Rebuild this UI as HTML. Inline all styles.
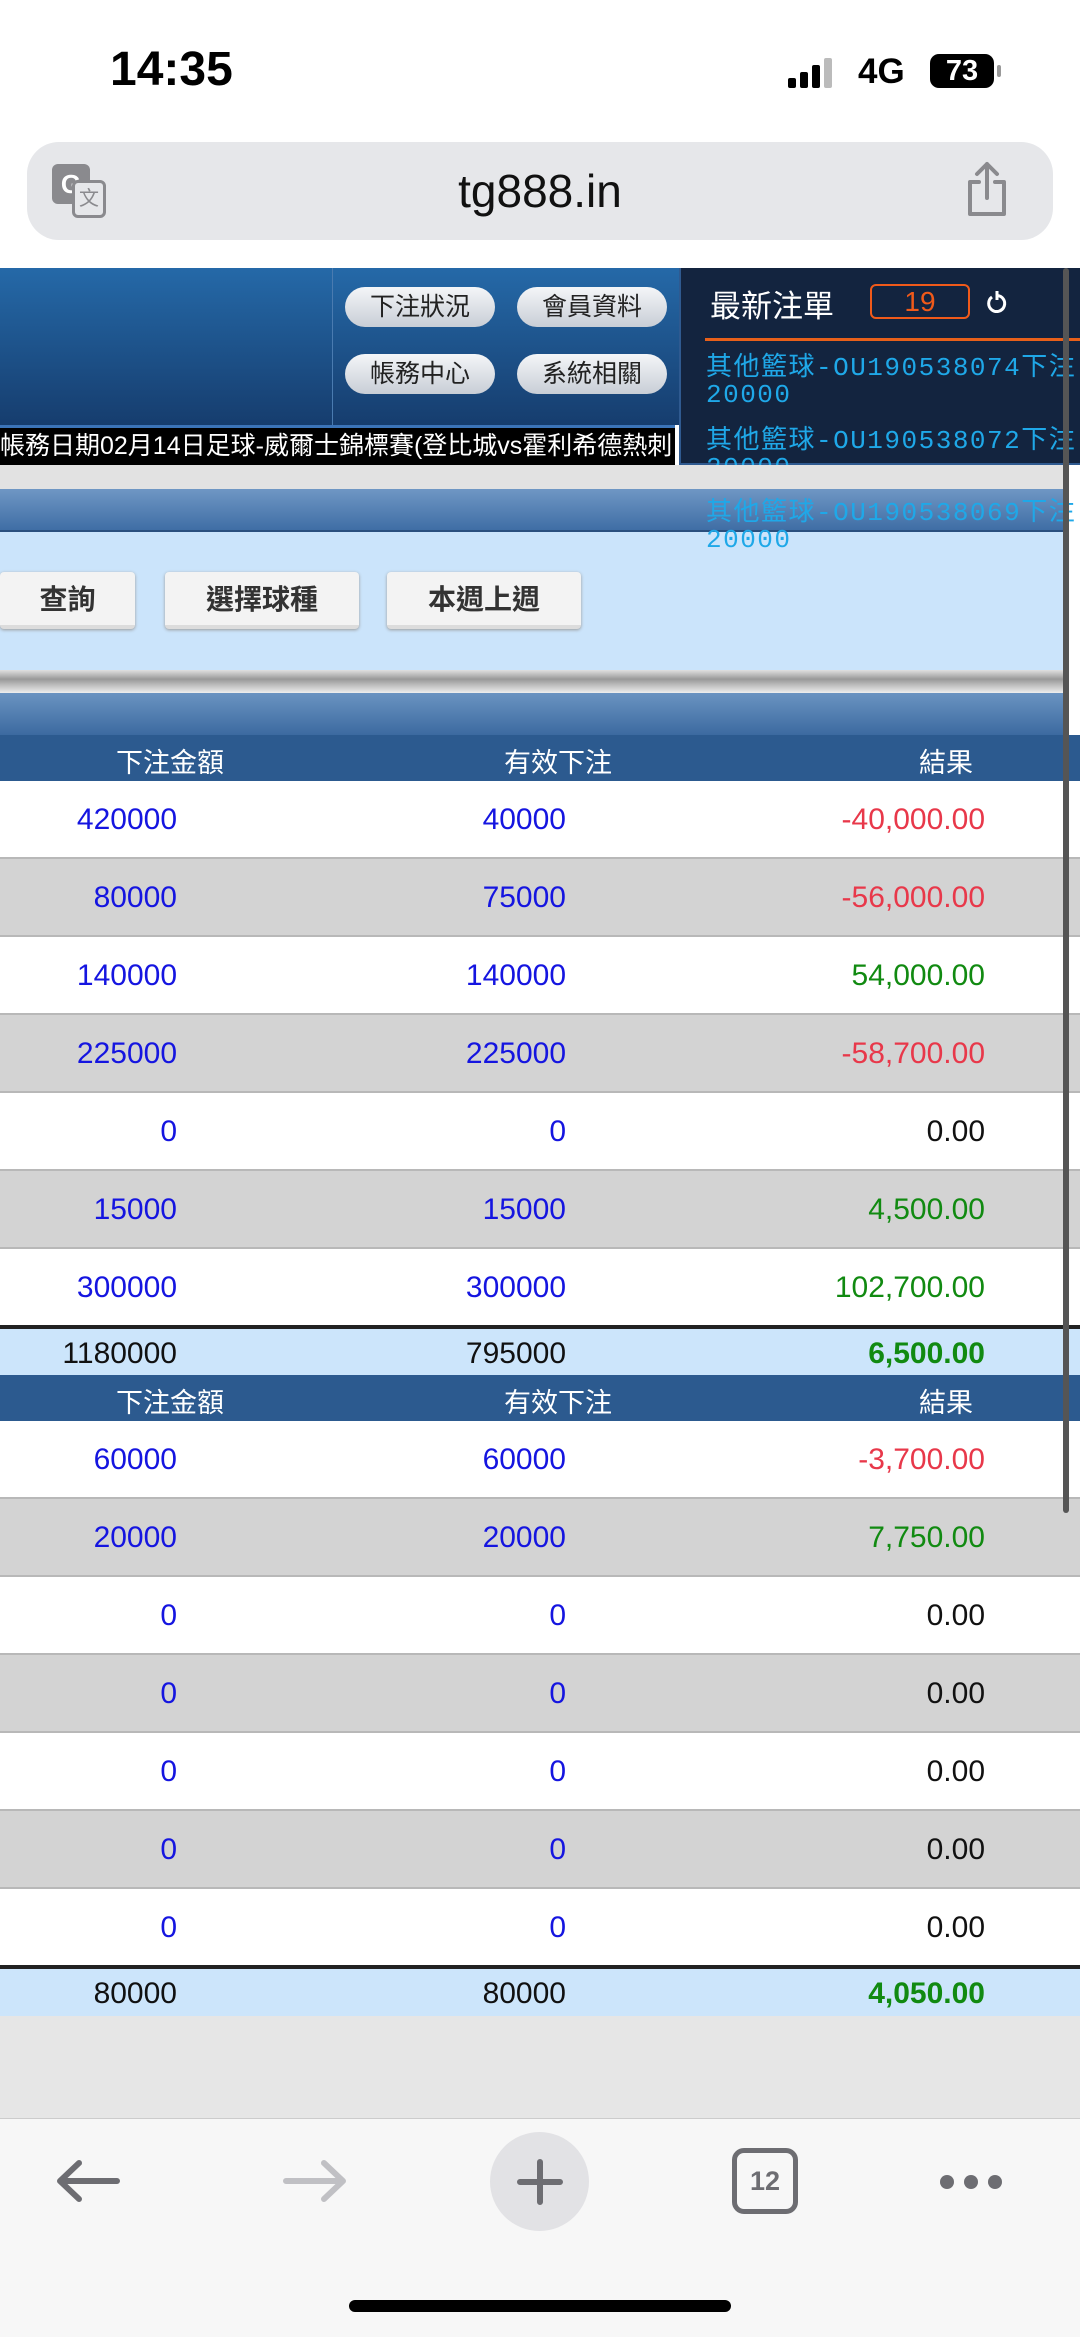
<!DOCTYPE html>
<html><head><meta charset="utf-8"><style>
*{margin:0;padding:0;box-sizing:border-box}
body{width:1080px;height:2337px;position:relative;overflow:hidden;background:#fff;font-family:"Liberation Sans","Noto Sans CJK TC",sans-serif}
.a{position:absolute}
.btn{position:absolute;height:40px;width:150px;border-radius:20px;background:linear-gradient(#f4f6f8,#c8ced6);color:#222;font-size:25px;text-align:center;line-height:40px}
.bet{position:absolute;left:706px;color:#1fa8e8;font-size:26px;font-family:"Liberation Mono","Noto Sans CJK TC",monospace;white-space:nowrap;letter-spacing:1.5px}
.sb{position:absolute;top:572px;height:57px;background:#f3f3f3;border-bottom:4px solid #dcdcdc;border-radius:4px;box-shadow:0 1px 3px #999;font-size:28px;font-weight:bold;color:#333;text-align:center;line-height:55px}
.hd{position:absolute;left:0;width:1080px;height:46px;background:#2c5a8f;color:#fff;font-size:27px}
.hd span{position:absolute;top:6px;transform:translateX(-50%)}
.row{position:absolute;left:0;width:1080px;height:78px;border-bottom:2px solid #b8b8b8;font-size:30px}
.row span,.tot span{position:absolute;top:22px;text-align:right}
.c1{right:903px;color:#1515e0}.c2{right:514px;color:#1515e0}.c3{right:95px}
.g{background:#d3d3d3}
.r{color:#e8384a}.gr{color:#118a11}.k{color:#111}
.tot{position:absolute;left:0;width:1080px;height:46px;background:#cce5fb;border-top:4px solid #222;font-size:30px;color:#111}
.tot span{top:8px}
</style></head><body>
<!-- status bar -->
<div class="a" style="left:110px;top:42px;font-size:48px;font-weight:bold;color:#000">14:35</div>
<div class="a" style="left:788px;top:58px;width:48px;height:30px">
<div class="a" style="left:0;top:20px;width:8px;height:10px;background:#000;border-radius:2px"></div>
<div class="a" style="left:12px;top:14px;width:8px;height:16px;background:#000;border-radius:2px"></div>
<div class="a" style="left:24px;top:7px;width:8px;height:23px;background:#000;border-radius:2px"></div>
<div class="a" style="left:36px;top:0;width:8px;height:30px;background:#bbb;border-radius:2px"></div></div>
<div class="a" style="left:858px;top:52px;font-size:35px;font-weight:bold">4G</div>
<div class="a" style="left:930px;top:54px;width:64px;height:34px;background:#000;border-radius:9px;color:#fff;font-size:29px;font-weight:bold;text-align:center;line-height:34px">73</div>
<div class="a" style="left:997px;top:65px;width:4px;height:12px;background:#999;border-radius:2px"></div>
<!-- url bar -->
<div class="a" style="left:27px;top:142px;width:1026px;height:98px;background:#e6e7ea;border-radius:32px"></div>
<div class="a" style="left:52px;top:164px;width:38px;height:40px;background:#8a8a8e;border-radius:6px;color:#fff;font-weight:bold;font-size:26px;line-height:40px;text-align:center">G</div>
<div class="a" style="left:72px;top:180px;width:34px;height:38px;border:3px solid #8a8a8e;border-radius:6px;background:#e6e7ea;font-size:20px;color:#8a8a8e;text-align:center;line-height:32px">文</div>
<div class="a" style="left:0;top:164px;width:1080px;text-align:center;font-size:46px;color:#111">tg888.in</div>
<svg class="a" style="left:962px;top:160px" width="50" height="60" viewBox="0 0 50 60"><path d="M17 22H8v32h34V22h-9M25 38V4M15 14l10-10 10 10" fill="none" stroke="#8a8a8e" stroke-width="4" stroke-linecap="round" stroke-linejoin="round"/></svg>
<!-- header -->
<div class="a" style="left:0;top:268px;width:679px;height:157px;background:linear-gradient(#2569a8,#163d6e)"></div>
<div class="a" style="left:332px;top:268px;width:1px;height:157px;background:#4a7bb0"></div>
<div class="a" style="left:0;top:425px;width:675px;height:40px;background:#000;border-top:3px solid #3b74b8;color:#fff;font-size:25px;white-space:nowrap;overflow:hidden;line-height:36px">帳務日期02月14日足球-威爾士錦標賽(登比城vs霍利希德熱刺</div>
<div class="btn" style="left:345px;top:287px">下注狀況</div>
<div class="btn" style="left:517px;top:287px">會員資料</div>
<div class="btn" style="left:345px;top:354px">帳務中心</div>
<div class="btn" style="left:517px;top:354px">系統相關</div>
<div class="a" style="left:679px;top:268px;width:401px;height:197px;background:#13243f;border-left:2px solid #2f5a90;border-bottom:2px solid #2f5a90"></div>
<div class="a" style="left:710px;top:281px;color:#fff;font-size:31px">最新注單</div>
<div class="a" style="left:870px;top:284px;width:100px;height:35px;border:2px solid #f05a1a;border-radius:6px;color:#f05a1a;font-size:28px;text-align:center;line-height:31px">19</div>
<svg class="a" style="left:984px;top:288px" width="24" height="30" viewBox="0 0 24 30"><path d="M8 9a8 8 0 1 0 5-1.5M13 3v9" fill="none" stroke="#fff" stroke-width="3"/></svg>
<div class="a" style="left:705px;top:338px;width:375px;height:3px;background:#e8601a"></div>
<div class="bet" style="top:346px">其他籃球-OU190538074下注</div>
<div class="bet" style="top:380px">20000</div>
<div class="bet" style="top:419px">其他籃球-OU190538072下注</div>
<div class="bet" style="top:453px">20000</div>
<!-- bars -->
<div class="a" style="left:0;top:465px;width:1065px;height:24px;background:#e2e2e2"></div>
<div class="a" style="left:0;top:489px;width:1065px;height:43px;background:linear-gradient(#6f97c4,#3f6ea5);border-bottom:2px solid #2a4f7e"></div>
<div class="a" style="left:0;top:532px;width:1065px;height:138px;background:#cbe4fb"></div>
<div class="bet" style="top:491px">其他籃球-OU190538069下注</div>
<div class="bet" style="top:525px">20000</div>
<div class="sb" style="left:0;width:135px">查詢</div>
<div class="sb" style="left:165px;width:194px">選擇球種</div>
<div class="sb" style="left:387px;width:194px">本週上週</div>
<div class="a" style="left:0;top:670px;width:1065px;height:23px;background:linear-gradient(#e0e0e0,#999 40%,#eee)"></div>
<div class="a" style="left:0;top:693px;width:1065px;height:42px;background:linear-gradient(#6a93c1,#3c6aa0)"></div>
<!-- table 1 -->
<div class="hd" style="top:735px"><span style="left:170px">下注金額</span><span style="left:558px">有效下注</span><span style="left:946px">結果</span></div>
<div class="row" style="top:781px"><span class="c1">420000</span><span class="c2">40000</span><span class="c3 r">-40,000.00</span></div>
<div class="row g" style="top:859px"><span class="c1">80000</span><span class="c2">75000</span><span class="c3 r">-56,000.00</span></div>
<div class="row" style="top:937px"><span class="c1">140000</span><span class="c2">140000</span><span class="c3 gr">54,000.00</span></div>
<div class="row g" style="top:1015px"><span class="c1">225000</span><span class="c2">225000</span><span class="c3 r">-58,700.00</span></div>
<div class="row" style="top:1093px"><span class="c1">0</span><span class="c2">0</span><span class="c3 k">0.00</span></div>
<div class="row g" style="top:1171px"><span class="c1">15000</span><span class="c2">15000</span><span class="c3 gr">4,500.00</span></div>
<div class="row" style="top:1249px;border-bottom:none"><span class="c1">300000</span><span class="c2">300000</span><span class="c3 gr">102,700.00</span></div>
<div class="tot" style="top:1325px;height:50px"><span class="c1" style="color:#111">1180000</span><span class="c2" style="color:#111">795000</span><span class="c3 gr" style="font-weight:bold">6,500.00</span></div>
<!-- table 2 -->
<div class="hd" style="top:1375px"><span style="left:170px">下注金額</span><span style="left:558px">有效下注</span><span style="left:946px">結果</span></div>
<div class="row" style="top:1421px"><span class="c1">60000</span><span class="c2">60000</span><span class="c3 r">-3,700.00</span></div>
<div class="row g" style="top:1499px"><span class="c1">20000</span><span class="c2">20000</span><span class="c3 gr">7,750.00</span></div>
<div class="row" style="top:1577px"><span class="c1">0</span><span class="c2">0</span><span class="c3 k">0.00</span></div>
<div class="row g" style="top:1655px"><span class="c1">0</span><span class="c2">0</span><span class="c3 k">0.00</span></div>
<div class="row" style="top:1733px"><span class="c1">0</span><span class="c2">0</span><span class="c3 k">0.00</span></div>
<div class="row g" style="top:1811px"><span class="c1">0</span><span class="c2">0</span><span class="c3 k">0.00</span></div>
<div class="row" style="top:1889px;border-bottom:none"><span class="c1">0</span><span class="c2">0</span><span class="c3 k">0.00</span></div>
<div class="tot" style="top:1965px;height:51px"><span class="c1" style="color:#111">80000</span><span class="c2" style="color:#111">80000</span><span class="c3 gr" style="font-weight:bold">4,050.00</span></div>
<div class="a" style="left:0;top:2016px;width:1080px;height:102px;background:#e6e6e6"></div>
<!-- scrollbar -->
<div class="a" style="left:1063px;top:268px;width:6px;height:1245px;background:#555;border-radius:3px"></div>
<!-- toolbar -->
<div class="a" style="left:0;top:2118px;width:1080px;height:219px;background:#f7f7f7;border-top:1px solid #ccc"></div>
<svg class="a" style="left:55px;top:2158px" width="66" height="46" viewBox="0 0 66 46"><path d="M62 23H6M24 5L5 23l19 18" fill="none" stroke="#6d6d72" stroke-width="6" stroke-linecap="round" stroke-linejoin="round"/></svg>
<svg class="a" style="left:282px;top:2158px" width="66" height="46" viewBox="0 0 66 46"><path d="M4 23h56M42 5l19 18-19 18" fill="none" stroke="#c0c0c4" stroke-width="6" stroke-linecap="round" stroke-linejoin="round"/></svg>
<div class="a" style="left:490px;top:2132px;width:99px;height:99px;border-radius:50%;background:#e2e2e5"></div>
<svg class="a" style="left:514px;top:2156px" width="52" height="52" viewBox="0 0 52 52"><path d="M26 6v40M6 26h40" stroke="#6d6d72" stroke-width="6" stroke-linecap="round"/></svg>
<div class="a" style="left:732px;top:2148px;width:66px;height:66px;border:5px solid #6d6d72;border-radius:12px;font-size:27px;font-weight:bold;color:#6d6d72;text-align:center;line-height:56px">12</div>
<div class="a" style="left:940px;top:2175px;width:14px;height:14px;border-radius:50%;background:#6d6d72;box-shadow:24px 0 #6d6d72,48px 0 #6d6d72"></div>
<div class="a" style="left:349px;top:2300px;width:382px;height:12px;border-radius:6px;background:#000"></div>
</body></html>
